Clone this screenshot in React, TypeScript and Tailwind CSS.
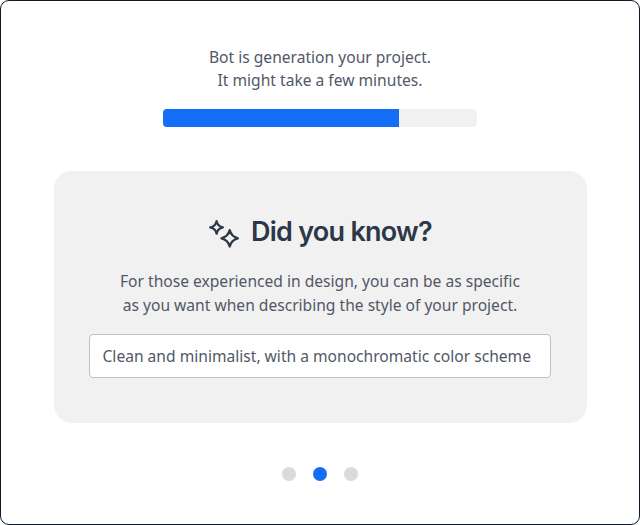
import React from "react";

function Sparkles() {
  return (
    <svg
      width="32"
      height="30"
      viewBox="0 0 32 30"
      fill="none"
      stroke="#2d3748"
      strokeWidth="2.3"
      strokeLinejoin="round"
      className="relative top-[1.5px] shrink-0"
    >
      <path d="M8.6 2.1 Q9.6 7.4 14.9 8.4 Q9.6 9.4 8.6 14.7 Q7.6 9.4 2.3 8.4 Q7.6 7.4 8.6 2.1Z" />
      <path d="M21.7 11.1 Q23.3 17.7 29.9 19.3 Q23.3 20.9 21.7 27.5 Q20.1 20.9 13.5 19.3 Q20.1 17.7 21.7 11.1Z" />
    </svg>
  );
}

export default function App() {
  return (
    <main className="flex h-[525px] w-[640px] flex-col items-center rounded-[9px] border border-[#111827] bg-white pt-[44.5px] font-['Noto_Sans',sans-serif] text-[15.6px] leading-[23.5px] text-[#515767]">
      <p className="text-center">
        Bot is generation your project.
        <br />
        It might take a few minutes.
      </p>
      <div className="mt-[16.5px] h-[18px] w-[314px] overflow-hidden rounded-[4px] bg-[#f1f1f1]">
        <div className="h-full w-[235.5px] bg-[#146ef5]" />
      </div>
      <section className="mt-[44px] flex h-[251.5px] w-[533px] flex-col items-center rounded-[18px] bg-[#f1f1f1] pt-[43px]">
        <div className="flex h-[36px] items-center gap-[11.5px]">
          <Sparkles />
          <h1 className="w-[181.5px] whitespace-nowrap font-['Inter',sans-serif] text-[27px] font-semibold leading-[36px] tracking-[-0.75px] text-[#2d3748]">
            Did you know?
          </h1>
        </div>
        <p className="mt-[20px] text-center">
          For those experienced in design, you can be as specific
          <br />
          as you want when describing the style of your project.
        </p>
        <div className="mt-[16.5px] flex h-[44px] w-[462px] shrink-0 items-center whitespace-nowrap rounded-[4px] border border-[#c0c0c9] bg-white px-[12.5px] pt-0.5">
          Clean and minimalist, with a monochromatic color scheme
        </div>
      </section>
      <div className="mt-[44.5px] flex gap-[17.5px]">
        <span className="size-[13.5px] rounded-full bg-[#d9dadb]" />
        <span className="size-[13.5px] rounded-full bg-[#146ef5]" />
        <span className="size-[13.5px] rounded-full bg-[#d9dadb]" />
      </div>
    </main>
  );
}
